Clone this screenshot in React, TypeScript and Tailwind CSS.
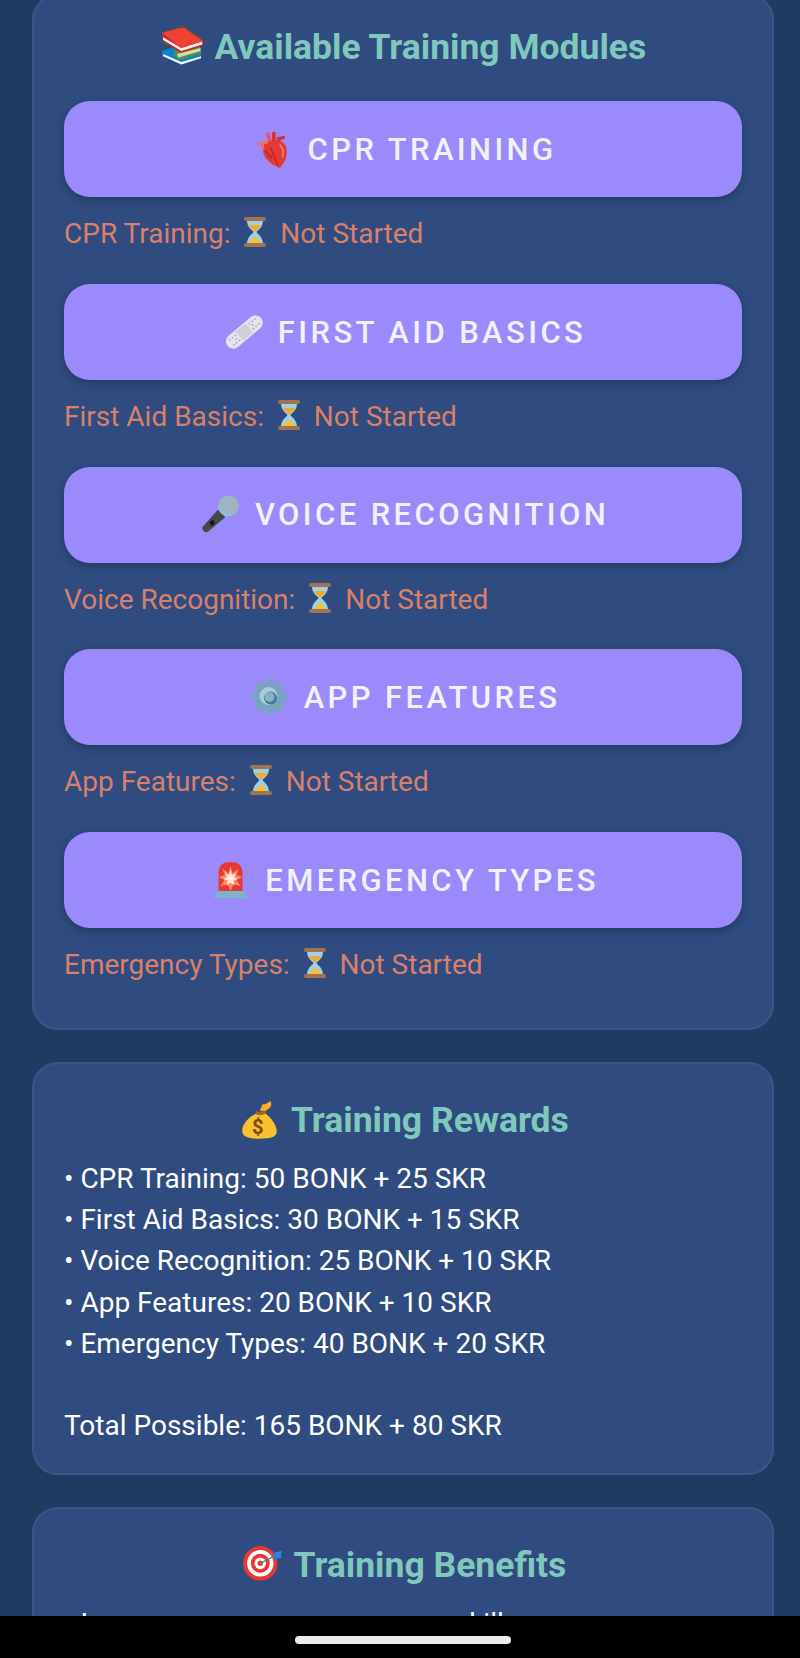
import React from 'react'

const Books = () => (
  <svg viewBox="20 18 125 115" className="inline-block w-[46px] h-[42px] align-[-7px]">
    <path d="M25 92 L55 82 L110 100 L132 100 L132 112 L78 129 L26 106 Z" fill="#0288d1" />
    <path d="M28 100 L78 122 L132 106 L132 112 L78 129 L28 106 Z" fill="#f5f5f5" />
    <path d="M58 90 L128 76 L132 92 L132 100 L72 116 L58 105 Z" fill="#5d8a4a" />
    <path d="M66 100 L130 84 L131 92 L70 110 Z" fill="#cfe0a0" />
    <path d="M25 42 L85 26 L137 64 L137 78 L78 97 L28 68 Z" fill="#c62828" />
    <path d="M28 54 L78 84 L135 66 L135 74 L78 92 L28 62 Z" fill="#f5f0ea" />
    <path d="M25 42 L85 26 L137 64 L78 84 Z" fill="#ef4136" />
    <path d="M40 32 L85 20 L137 58 L137 64 L85 28 Z" fill="#4e4e55" />
  </svg>
)

const Heart = () => (
  <svg viewBox="11 17 116 116" className="inline-block w-[47px] h-[40px] align-[-9px]">
    <path d="M55 52 C38 58 38 88 50 102 C60 116 78 126 90 130 C102 118 113 98 110 76 C108 60 96 50 84 50 C74 48 64 48 55 52 Z" fill="#e53935" />
    <path d="M50 30 L60 26 L66 52 L58 56 Z" fill="#ef5350" />
    <path d="M68 26 L78 26 L78 52 L68 52 Z" fill="#d32f2f" />
    <path d="M80 42 L104 36 L106 44 L84 54 Z" fill="#d32f2f" />
    <path d="M24 58 L54 48 L56 58 L42 62 L46 76 L38 78 L34 64 L26 66 Z" fill="#ef7070" />
    <path d="M62 70 C72 84 74 104 86 124" stroke="#b71c1c" strokeWidth="3" fill="none" />
    <path d="M90 62 C100 74 102 88 98 100" stroke="#f47c7c" strokeWidth="5" fill="none" />
    <path d="M48 78 C54 90 60 96 68 102" stroke="#c62828" strokeWidth="6" fill="none" />
  </svg>
)

const Bandage = () => (
  <svg viewBox="-3 -2 44 44" className="inline-block w-[47px] h-[40px] align-[-9px]">
    <g transform="rotate(-40 20 20)">
      <rect x="-4" y="12" width="48" height="16" rx="8" fill="#e4e4ee" />
      <rect x="13" y="13.5" width="14" height="13" rx="1" fill="#cfcfd6" />
      {[2, 6, 10, 30, 34, 38].map((x) => (
        <g key={x} fill="#a0a0aa">
          <circle cx={x} cy="16.5" r="0.9" />
          <circle cx={x} cy="23.5" r="0.9" />
        </g>
      ))}
      <circle cx="8" cy="20" r="0.9" fill="#a0a0aa" />
      <circle cx="32" cy="20" r="0.9" fill="#a0a0aa" />
    </g>
  </svg>
)

const Mic = () => (
  <svg viewBox="0 0 40 40" className="inline-block w-[47px] h-[40px] align-[-9px]">
    <path d="M18 15 L25 23 L7 38 C4 39 1 36 2 33 Z" fill="#47474b" />
    <path d="M9 28 L13 26 L14 30 L11 32 Z" fill="#111" />
    <circle cx="28" cy="12" r="10.5" fill="#9fb4c2" />
    <path d="M17 15 L25 23 L28 22 L18 12 Z" fill="#7fc4e6" />
  </svg>
)

const Gear = () => (
  <svg viewBox="0 0 40 40" className="inline-block w-[47px] h-[40px] align-[-9px]">
    <g fill="#78a5bd">
      <circle cx="20" cy="20" r="14" />
      {[0, 45, 90, 135, 180, 225, 270, 315].map((a) => (
        <rect key={a} x="16" y="2" width="8" height="8" rx="2" transform={`rotate(${a} 20 20)`} />
      ))}
    </g>
    <circle cx="19" cy="19" r="9" fill="#a9cbdc" />
    <circle cx="21" cy="21" r="6.5" fill="#3d7c96" />
    <circle cx="20" cy="20" r="5" fill="#8ab0c6" />
  </svg>
)

const Light = () => (
  <svg viewBox="0 0 40 40" className="inline-block w-[47px] h-[40px] align-[-9px]">
    <path d="M8 32 L8 13 C8 5 13 2 20 2 C27 2 32 5 32 13 L32 32 Z" fill="#e53935" />
    <path d="M20 6 L22 13 L28 9 L25.5 15 L32 17 L26 20 L30 26 L23 24.5 L20 31 L17 24.5 L10 26 L14 20 L8 17 L14.500 15 L12 9 L18 13 Z" fill="#ff8a65" />
    <path d="M20 10 L21.500 15 L26 13 L23.500 17 L27 19 L23 20.500 L24 25 L20 22.500 L16 25 L17 20.500 L13 19 L16.500 17 L14 13 L18.500 15 Z" fill="#ffe9e0" />
    <path d="M6 31 L34 31 L37 38 L3 38 Z" fill="#7fb3c8" />
  </svg>
)

const Hourglass = () => (
  <svg viewBox="0 0 36 36" className="inline-block w-[36px] h-[36px] align-[-7px]">
    <path d="M10 6 L26 6 C26 14 21 15.500 19.500 18 C21 20.500 26 23 26 30 L10 30 C10 23 15 20.500 16.500 18 C15 15.500 10 14 10 6 Z" fill="#9fd0e8" />
    <path d="M11.500 11 L24.500 11 C23 14 19.500 15 18 18 C16.500 15 13 14 11.500 11 Z" fill="#f9a825" />
    <path d="M18 22 L25 30 L11 30 Z" fill="#fbc02d" />
    <rect x="7" y="3" width="22" height="4" rx="2" fill="#a1734f" />
    <rect x="7" y="29" width="22" height="4" rx="2" fill="#a1734f" />
  </svg>
)

const MoneyBag = () => (
  <svg viewBox="11 5 135 135" className="inline-block w-[46px] h-[44px] align-[-10px]">
    <path d="M68 52 C46 62 22 86 24 108 C26 126 46 130 78 130 C108 130 130 126 130 108 C130 88 112 64 92 50 Z" fill="#fbc02d" />
    <path d="M66 44 C76 50 86 48 96 42 L98 52 C86 58 76 60 66 54 Z" fill="#a8641a" />
    <path d="M78 44 C80 36 84 34 86 24 C92 26 100 22 110 14 C118 26 110 36 96 44 Z" fill="#f9b21a" />
    <text x="72" y="117" textAnchor="middle" fontSize="62" fontWeight="700" fontFamily="Roboto, sans-serif" fill="#7c4a12">$</text>
  </svg>
)

const Target = () => (
  <svg viewBox="11 12 130 130" className="inline-block w-[46px] h-[44px] align-[-9px]">
    <circle cx="68" cy="75" r="51" fill="#e53935" />
    <circle cx="68" cy="75" r="39" fill="#fff" />
    <circle cx="68" cy="75" r="28" fill="#e53935" />
    <circle cx="68" cy="75" r="17" fill="#fff" />
    <circle cx="68" cy="75" r="8" fill="#e53935" />
    <path d="M68 75 L112 52" stroke="#607d8b" strokeWidth="4" />
    <path d="M104 56 L112 42 L134 38 L128 50 L132 58 L112 62 Z" fill="#1e88e5" />
  </svg>
)

const modules = [
  { icon: <Heart />, title: 'CPR TRAINING', status: 'CPR Training:' },
  { icon: <Bandage />, title: 'FIRST AID BASICS', status: 'First Aid Basics:' },
  { icon: <Mic />, title: 'VOICE RECOGNITION', status: 'Voice Recognition:' },
  { icon: <Gear />, title: 'APP FEATURES', status: 'App Features:' },
  { icon: <Light />, title: 'EMERGENCY TYPES', status: 'Emergency Types:' },
]

const rewards = [
  '• CPR Training: 50 BONK + 25 SKR',
  '• First Aid Basics: 30 BONK + 15 SKR',
  '• Voice Recognition: 25 BONK + 10 SKR',
  '• App Features: 20 BONK + 10 SKR',
  '• Emergency Types: 40 BONK + 20 SKR',
]

const cardClass = 'ml-[32px] mr-[26px] rounded-[26px] border-2 border-[#3b5686] bg-[#2f4b80] px-[30px]'
const headingClass = 'text-center text-[35.5px] leading-[44px] font-bold text-[#7fc8bb]'

export default function App() {
  return (
    <div className="w-[800px] h-[1658px] flex flex-col bg-black font-['Roboto',sans-serif]">
      <div className="flex-1 overflow-hidden bg-[#1f3b62]">
        <div className="-mt-[6px] flex flex-col gap-[32px]">
          {/* Modules */}
          <section className={`${cardClass} pt-[28px] pb-[43px]`}>
            <h2 className={headingClass}>
              <Books /> Available Training Modules
            </h2>
            <div className="mt-[32px] flex flex-col gap-[29.75px]">
              {modules.map((m) => (
                <div key={m.title}>
                  <button className="w-full h-[96px] pt-[2px] rounded-[26px] bg-[#9b8afb] text-[#f1f0fd] text-[31px] font-medium tracking-[3.4px] shadow-[0_3px_8px_rgba(0,0,0,0.25)]">
                    {m.icon} {m.title}
                  </button>
                  <p className="mt-[17px] text-[28px] leading-[40px] text-[#d8806a]">
                    {m.status} <Hourglass /> Not Started
                  </p>
                </div>
              ))}
            </div>
          </section>

          {/* Rewards */}
          <section className={`${cardClass} pt-[34px] pb-[27px]`}>
            <h2 className={headingClass}>
              <MoneyBag /> Training Rewards
            </h2>
            <div className="mt-[16px] text-[28px] leading-[41.2px] text-white">
              {rewards.map((r) => (
                <p key={r}>{r}</p>
              ))}
              <p className="mt-[41.2px]">Total Possible: 165 BONK + 80 SKR</p>
            </div>
          </section>

          {/* Benefits */}
          <section className={`${cardClass} pt-[33px] pb-[30px]`}>
            <h2 className={headingClass}>
              <Target /> Training Benefits
            </h2>
            <div className="mt-[16px] text-[28px] leading-[41.2px] text-white">
              <p>• Improve emergency response skills</p>
            </div>
          </section>
        </div>
      </div>
      {/* Nav bar */}
      <div className="h-[42px] shrink-0 pl-[6px] flex justify-center pt-[20px]">
        <div className="w-[216px] h-[8px] rounded-full bg-[#ececec]" />
      </div>
    </div>
  )
}
